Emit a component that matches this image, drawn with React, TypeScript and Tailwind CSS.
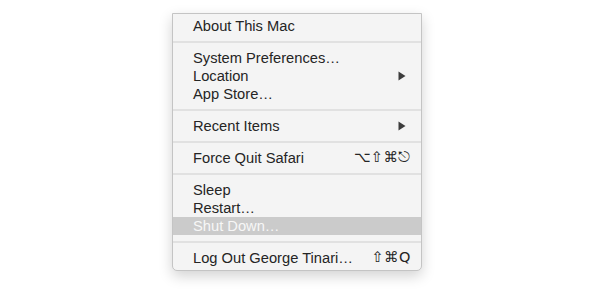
import { Fragment } from "react";

type Item = {
  label: string;
  shortcut?: string;
  submenu?: boolean;
  active?: boolean;
};

const groups: Item[][] = [
  [{ label: "About This Mac" }],
  [
    { label: "System Preferences…" },
    { label: "Location", submenu: true },
    { label: "App Store…" },
  ],
  [{ label: "Recent Items", submenu: true }],
  [{ label: "Force Quit Safari", shortcut: "⌥⇧⌘⎋" }],
  [{ label: "Sleep" }, { label: "Restart…" }, { label: "Shut Down…", active: true }],
  [{ label: "Log Out George Tinari…", shortcut: "⇧⌘Q" }],
];

function Arrow() {
  return (
    <svg width="8" height="10" viewBox="0 0 8 10" className="mr-[5px]">
      <path d="M0.5 0.5 L7.5 5 L0.5 9.5 Z" fill="#3c3c3c" />
    </svg>
  );
}

function Row({ item }: { item: Item }) {
  return (
    <div
      className={`flex h-[18px] items-center justify-between pl-[20px] pr-[10px] ${
        item.active ? "bg-[#cbcbcb] text-[#f7f7f7]" : "text-[#252525]"
      }`}
    >
      <span>{item.label}</span>
      {item.submenu && <Arrow />}
      {item.shortcut && (
        <span className="font-['DejaVu_Sans','Liberation_Sans',sans-serif] text-[14.5px] tracking-[0.5px]">
          {item.shortcut}
        </span>
      )}
    </div>
  );
}

export default function App() {
  return (
    <div className="min-h-screen bg-white font-['Liberation_Sans',Arial,sans-serif] text-[14.7px]">
      <div className="pl-[172px] pt-[13px]">
        <div className="w-[250px] rounded-b-[5px] border border-[#c4c4c4] bg-[#f4f4f4] py-[3px] shadow-[0_5px_14px_rgba(0,0,0,0.18)]">
          {groups.map((group, gi) => (
            <Fragment key={gi}>
              {gi > 0 && (
                <div className="flex h-[14px] items-center">
                  <div className="h-[2px] w-full bg-[#e1e1e1]" />
                </div>
              )}
              {group.map((item) => (
                <Row key={item.label} item={item} />
              ))}
            </Fragment>
          ))}
        </div>
      </div>
    </div>
  );
}
